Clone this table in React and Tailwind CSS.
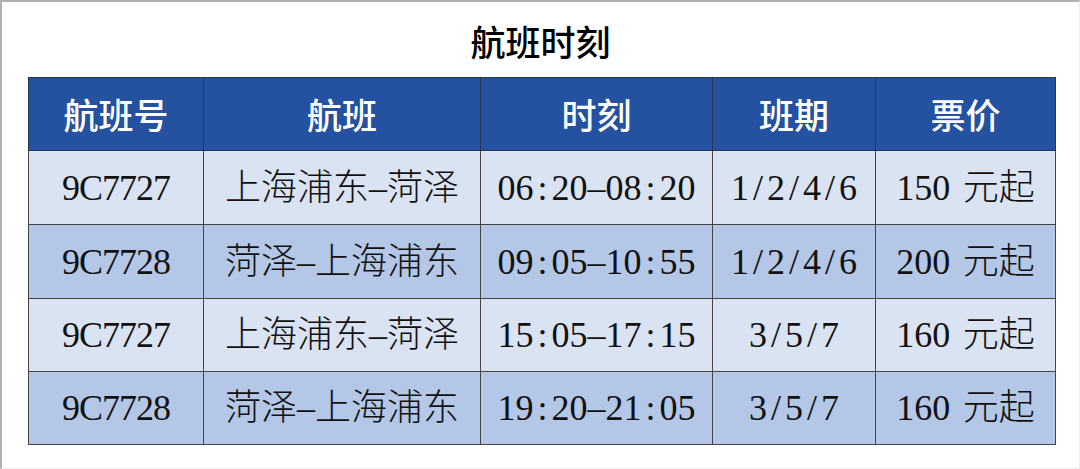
import React from "react";

const CJK = /[\u3000-\u9fff\uff00-\uffef]/;

function Half({ text }) {
  return (
    <span className="inline-flex items-baseline">
      {Array.from(text).map((c, i) =>
        CJK.test(c) ? (
          <span key={i} className="inline-block w-[1em] text-center font-light">
            {c}
          </span>
        ) : c === " " ? (
          <span key={i} className="inline-block w-[0.35em]">{"\u00a0"}</span>
        ) : (
          <span key={i} className="inline-block w-[0.5em] text-center">
            {c === "-" ? "\u2013" : c}
          </span>
        )
      )}
    </span>
  );
}

const rows = [
  ["9C7727", "上海浦东-菏泽", "06:20-08:20", "1/2/4/6", "150 元起"],
  ["9C7728", "菏泽-上海浦东", "09:05-10:55", "1/2/4/6", "200 元起"],
  ["9C7727", "上海浦东-菏泽", "15:05-17:15", "3/5/7", "160 元起"],
  ["9C7728", "菏泽-上海浦东", "19:20-21:05", "3/5/7", "160 元起"],
];

const heads = ["航班号", "航班", "时刻", "班期", "票价"];
const widths = ["w-[175px]", "w-[277px]", "w-[232px]", "w-[163px]", "w-[180px]"];
const rowH = ["h-[74px]", "h-[74px]", "h-[73px]", "h-[73px]"];

export default function App() {
  return (
    <div className="w-[1080px] h-[469px] bg-white border-l-2 border-t-2 border-l-[#b0b0b0] border-t-[#b0b0b0] border-r border-b border-r-[#ececec] border-b-[#ececec] box-border overflow-hidden">
      <div
        className="h-[75px] flex items-center justify-center pt-[4px] text-[35px] text-black font-medium"
        style={{ fontFamily: '"Noto Sans CJK SC", sans-serif' }}
      >
        航班时刻
      </div>
      <table className="ml-[26px] border-collapse table-fixed w-[1027px]">
        <thead>
          <tr className="h-[73px] bg-[#2451a0]">
            {heads.map((h, i) => (
              <th
                key={i}
                className={`${widths[i]} p-0 border border-[#2a3550] text-white text-[35px] font-medium text-center align-middle`}
                style={{ fontFamily: '"Noto Sans CJK SC", sans-serif' }}
              >
                {h}
              </th>
            ))}
          </tr>
        </thead>
        <tbody>
          {rows.map((r, ri) => (
            <tr
              key={ri}
              className={`${rowH[ri]} ${ri % 2 === 0 ? "bg-[#dae3f1]" : "bg-[#b4c7e7]"}`}
            >
              {r.map((c, ci) => (
                <td
                  key={ci}
                  className="p-0 border border-[#444] text-center align-middle text-[36px] text-[#111] leading-none"
                  style={{ fontFamily: '"Liberation Serif", "Noto Sans CJK SC", serif' }}
                >
                  {ci === 0 ? <span className="tracking-[-1px]">{c}</span> : <Half text={c} />}
                </td>
              ))}
            </tr>
          ))}
        </tbody>
      </table>
    </div>
  );
}
